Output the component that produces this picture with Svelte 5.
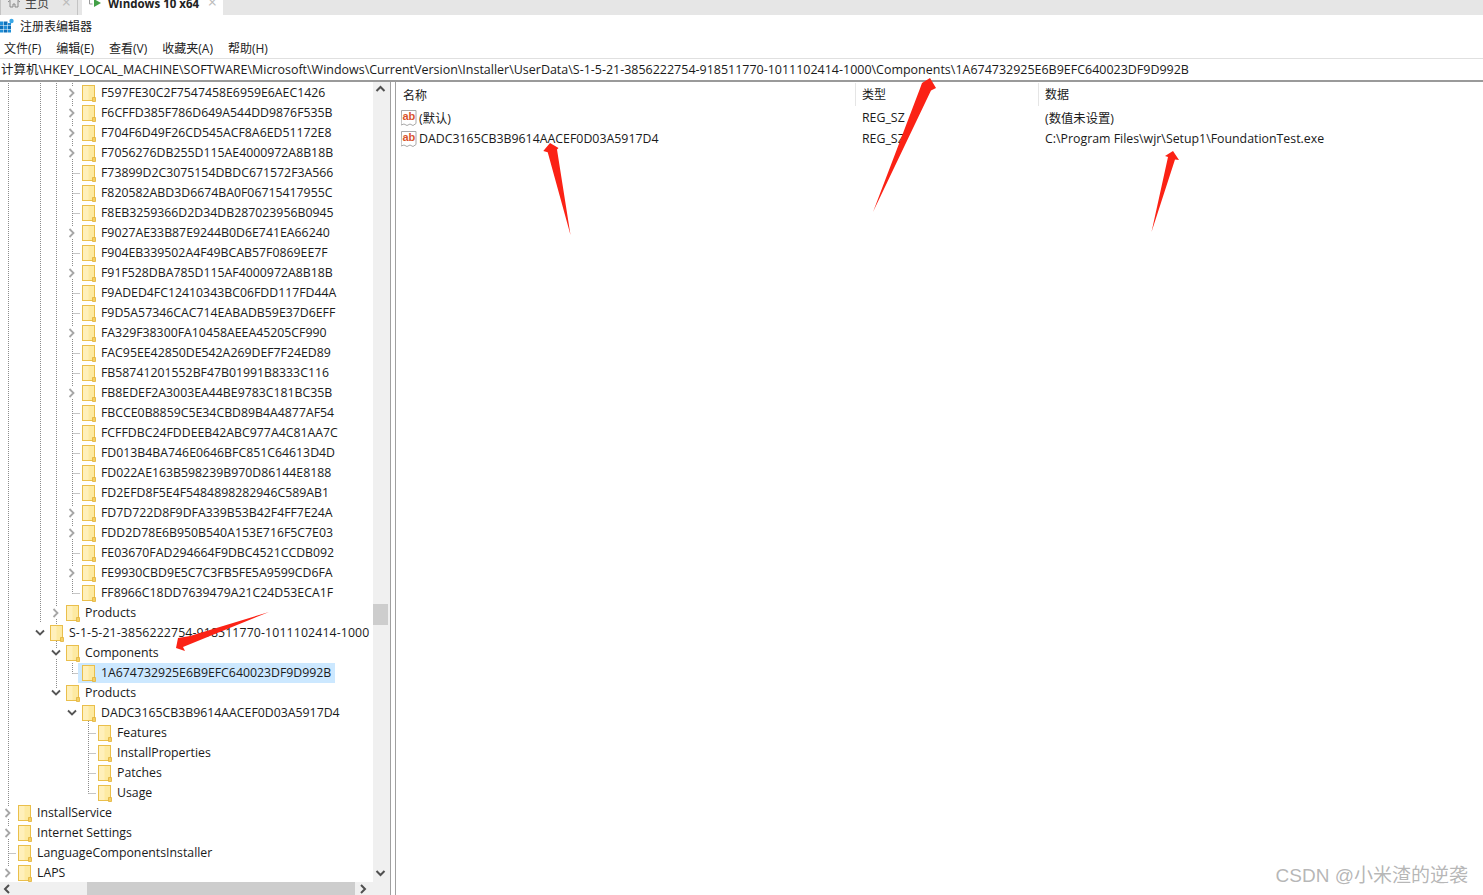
<script>
  const hashes = [
    ['F597FE30C2F7547458E6959E6AEC1426', 1],
    ['F6CFFD385F786D649A544DD9876F535B', 1],
    ['F704F6D49F26CD545ACF8A6ED51172E8', 1],
    ['F7056276DB255D115AE4000972A8B18B', 1],
    ['F73899D2C3075154DBDC671572F3A566', 0],
    ['F820582ABD3D6674BA0F06715417955C', 0],
    ['F8EB3259366D2D34DB287023956B0945', 0],
    ['F9027AE33B87E9244B0D6E741EA66240', 1],
    ['F904EB339502A4F49BCAB57F0869EE7F', 0],
    ['F91F528DBA785D115AF4000972A8B18B', 1],
    ['F9ADED4FC12410343BC06FDD117FD44A', 0],
    ['F9D5A57346CAC714EABADB59E37D6EFF', 0],
    ['FA329F38300FA10458AEEA45205CF990', 1],
    ['FAC95EE42850DE542A269DEF7F24ED89', 0],
    ['FB58741201552BF47B01991B8333C116', 0],
    ['FB8EDEF2A3003EA44BE9783C181BC35B', 1],
    ['FBCCE0B8859C5E34CBD89B4A4877AF54', 0],
    ['FCFFDBC24FDDEEB42ABC977A4C81AA7C', 0],
    ['FD013B4BA746E0646BFC851C64613D4D', 0],
    ['FD022AE163B598239B970D86144E8188', 0],
    ['FD2EFD8F5E4F5484898282946C589AB1', 0],
    ['FD7D722D8F9DFA339B53B42F4FF7E24A', 1],
    ['FDD2D78E6B950B540A153E716F5C7E03', 1],
    ['FE03670FAD294664F9DBC4521CCDB092', 0],
    ['FE9930CBD9E5C7C3FB5FE5A9599CD6FA', 1],
    ['FF8966C18DD7639479A21C24D53ECA1F', 0]
  ];
  const rows = [
    ...hashes.map(([label, more]) => ({ label, level: 4, state: more ? 'closed' : 'none' })),
    { label: 'Products', level: 3, state: 'closed' },
    { label: 'S-1-5-21-3856222754-918511770-1011102414-1000', level: 2, state: 'open', wide: true },
    { label: 'Components', level: 3, state: 'open' },
    { label: '1A674732925E6B9EFC640023DF9D992B', level: 4, state: 'none', selected: true },
    { label: 'Products', level: 3, state: 'open' },
    { label: 'DADC3165CB3B9614AACEF0D03A5917D4', level: 4, state: 'open' },
    { label: 'Features', level: 5, state: 'none' },
    { label: 'InstallProperties', level: 5, state: 'none' },
    { label: 'Patches', level: 5, state: 'none' },
    { label: 'Usage', level: 5, state: 'none' },
    { label: 'InstallService', level: 0, state: 'closed' },
    { label: 'Internet Settings', level: 0, state: 'closed' },
    { label: 'LanguageComponentsInstaller', level: 0, state: 'none' },
    { label: 'LAPS', level: 0, state: 'closed' }
  ];
  const stubs = rows
    .map((r, i) => {
      if (r.state !== 'none') return '';
      const x = 8 + r.level * 16;
      return `M${x + 0.5} ${i * 20 + 10.5}H${x + 8}`;
    })
    .join('');
  const trunks = 'M8.500 0V790M40.500 0V540M56.500 0V610M72.500 0V510.500M72.500 580V590.500M88.500 630V710.500';
  const menus = ['文件(F)', '编辑(E)', '查看(V)', '收藏夹(A)', '帮助(H)'];
  const values = [
    { name: '(默认)', type: 'REG_SZ', data: '(数值未设置)' },
    { name: 'DADC3165CB3B9614AACEF0D03A5917D4', type: 'REG_SZ', data: 'C:\\Program Files\\wjr\\Setup1\\FoundationTest.exe' }
  ];
</script>

<div class="page">
  <div class="tabs">
    <div class="tab home">
      <svg width="14" height="14" viewBox="0 0 14 14" class="ti"><path d="M1 6 7 1l6 5M3 5v6h3V8h2v3h3V5" fill="none" stroke="#8a8a8a"/></svg>
      <span class="tlabel">主页</span>
      <span class="x">×</span>
    </div>
    <div class="tab active">
      <svg width="16" height="14" viewBox="0 0 16 14" class="ti"><path d="M1.500 0v8h3" fill="none" stroke="#999"/><path d="M6 3l7 4-7 4z" fill="#43a047"/></svg>
      <span class="tlabel bold">Windows 10 x64</span>
      <span class="x">×</span>
    </div>
  </div>

  <div class="title">
    <svg width="14" height="16" viewBox="0 0 14 16">
      <rect x="0" y="3.500" width="3.500" height="3.500" fill="#1f8fd8"/><rect x="4" y="3.500" width="3.500" height="3.500" fill="#0f6fb8"/><rect x="8" y="5" width="3" height="2" fill="#1f8fd8"/>
      <rect x="0" y="7.500" width="3.500" height="3.500" fill="#0f6fb8"/><rect x="4" y="7.500" width="3.500" height="3.500" fill="#1f8fd8"/><rect x="8" y="7.500" width="3" height="3.500" fill="#0f6fb8"/>
      <rect x="0" y="11.500" width="3.500" height="3" fill="#1f8fd8"/><rect x="4" y="11.500" width="3.500" height="3" fill="#0f6fb8"/><rect x="8" y="11.500" width="3" height="3" fill="#1f8fd8"/>
      <circle cx="11.500" cy="3" r="2.200" fill="#3aa7e6"/>
    </svg>
    <span>注册表编辑器</span>
  </div>

  <div class="menu">
    {#each menus as m}<span>{m}</span>{/each}
  </div>

  <div class="address">计算机\HKEY_LOCAL_MACHINE\SOFTWARE\Microsoft\Windows\CurrentVersion\Installer\UserData\S-1-5-21-3856222754-918511770-1011102414-1000\Components\1A674732925E6B9EFC640023DF9D992B</div>

  <div class="main">
    <div class="treepane">
      <div class="treebody">
        <div class="tree">
          <svg class="guides" width="373" height="800">
            <g stroke="#8c8c8c" stroke-dasharray="1 1" fill="none">
              <path d={trunks} />
              <path d={stubs} />
            </g>
          </svg>
          {#each rows as r}
            <div class="row lvl{r.level}">
              <span class="chev">
                {#if r.state === 'closed'}
                  <svg class="glyph" width="8" height="10" viewBox="0 0 8 10"><path d="M1.500 1 5.500 5 1.500 9" fill="none" stroke="#a6a6a6" stroke-width="1.800"/></svg>
                {:else if r.state === 'open'}
                  <svg class="glyph" width="10" height="8" viewBox="0 0 10 8"><path d="M1 1.500 5 5.500 9 1.500" fill="none" stroke="#555" stroke-width="1.800"/></svg>
                {/if}
              </span>
              <div class="item" class:selected={r.selected}>
                <svg class="folder" width="14" height="17" viewBox="0 0 14 17">
                  <rect x=".5" y=".5" width="12" height="15" fill="#fdeaa2" stroke="#eabf4c"/>
                  <path d="M1 1h5.500v14H1z" fill="#fff0bb"/>
                  <path d="M10.500 12.500v4h3v-4z" fill="#f5cf63" stroke="#e2b238" stroke-width=".8"/>
                </svg>
                <span class="label" class:wide={r.wide}>{r.label}</span>
              </div>
            </div>
          {/each}
        </div>
        <div class="vbar">
          <svg width="15" height="14" viewBox="0 0 15 14"><path d="M3.500 9 7.500 5l4 4" fill="none" stroke="#505050" stroke-width="2"/></svg>
          <div class="vtrack"><div class="vthumb"></div></div>
          <svg width="15" height="14" viewBox="0 0 15 14"><path d="M3.500 3 7.500 7l4-4" fill="none" stroke="#505050" stroke-width="2"/></svg>
        </div>
      </div>
      <div class="hbar">
        <svg width="14" height="13" viewBox="0 0 14 13"><path d="M9 3 5 7l4 4" fill="none" stroke="#505050" stroke-width="2"/></svg>
        <div class="htrack"><div class="hthumb"></div></div>
        <svg width="14" height="13" viewBox="0 0 14 13"><path d="M2 3l4 4-4 4" fill="none" stroke="#505050" stroke-width="2"/></svg>
      </div>
    </div>

    <div class="list">
      <div class="head">
        <div class="cname">名称</div>
        <div class="ctype">类型</div>
        <div class="cdata">数据</div>
      </div>
      {#each values as v}
        <div class="vrow">
          <div class="cname v">
            <svg class="ab" width="16" height="16" viewBox="0 0 16 16">
              <path d="M.5.5h14.500v13l-3 2-3-1.500-3 1.500-3-1.500-3 1z" fill="#fff" stroke="#a8a8a8"/>
              <text x="1.500" y="10" class="abtext">ab</text>
            </svg>
            <span>{v.name}</span>
          </div>
          <div class="ctype v">{v.type}</div>
          <div class="cdata v">{v.data}</div>
        </div>
      {/each}
    </div>
  </div>

  <svg class="arrows" width="1483" height="895">
    <g fill="#fb2215">
      <polygon points="550,143 558.500,148 557,149.500 570.500,235 547.700,152.300 543.300,151"/>
      <polygon points="930,78 936,88 931,90.500 873,212 920,88.500 922,83"/>
      <polygon points="1173,151 1179,160 1175,159.500 1151.500,232 1168,157 1165,156"/>
      <polygon points="269,612 190,636 178,638 176,648 185,651 183,647"/>
    </g>
  </svg>

  <div class="mark">CSDN @小米渣的逆袭</div>
</div>

<style>
  :global(body) {
    margin: 0;
    background: #fff;
    overflow: hidden;
  }
  .page {
    position: relative;
    width: 1483px;
    height: 895px;
    overflow: hidden;
    display: flex;
    flex-direction: column;
    font-family: "Open Sans", "Noto Sans CJK SC", sans-serif;
    font-size: 12px;
    color: #1a1a1a;
    background: #fff;
  }
  .tabs {
    height: 15px;
    flex: none;
    background: #e6e6e6;
    display: flex;
    align-items: flex-end;
    overflow: hidden;
  }
  .tab {
    height: 24px;
    display: flex;
    align-items: center;
    box-sizing: border-box;
    flex: none;
    position: relative;
  }
  .tab.home {
    width: 78px;
    padding-left: 6px;
    border-right: 1px solid #c4c4c4;
    margin-right: 4px;
    border-left: 1px solid #c4c4c4;
  }
  .tab.active {
    width: 141px;
    padding-left: 6px;
    background: #fff;
  }
  .ti { flex: none; }
  .tlabel { margin-left: 4px; color: #444; }
  .tlabel.bold { margin-left: 4px; font-weight: 700; color: #222; font-size: 11.500px; }
  .x {
    position: absolute;
    right: 6px;
    top: 3px;
    color: #bbb;
    font-size: 16px;
    line-height: 16px;
  }
  .title {
    height: 22px;
    flex: none;
    display: flex;
    align-items: center;
    gap: 6px;
    font-size: 12px;
    color: #222;
  }
  .menu {
    height: 21px;
    flex: none;
    display: flex;
    align-items: center;
    gap: 15px;
    padding-left: 4px;
    font-size: 12px;
    color: #222;
  }
  .address {
    height: 24px;
    flex: none;
    box-sizing: border-box;
    border-top: 1px solid #e0e0e0;
    border-bottom: 2px solid #9a9a9a;
    line-height: 21px;
    padding-left: 1px;
    white-space: nowrap;
    font-size: 12.480px;
  }
  .main {
    flex: 1;
    min-height: 0;
    display: flex;
  }
  .treepane {
    width: 391px;
    flex: none;
    display: flex;
    flex-direction: column;
    box-sizing: border-box;
    border-right: 1px solid #a0a0a0;
  }
  .treebody {
    flex: 1;
    min-height: 0;
    display: flex;
  }
  .tree {
    position: relative;
    width: 373px;
    flex: none;
    overflow: hidden;
    font-size: 12.300px;
    padding-top: 1px;
  }
  .guides {
    position: absolute;
    left: 0;
    top: 1px;
  }
  .row {
    position: relative;
    height: 20px;
    display: flex;
    align-items: center;
    white-space: nowrap;
  }
  .lvl0 { padding-left: 2px; }
  .lvl2 { padding-left: 34px; }
  .lvl3 { padding-left: 50px; }
  .lvl4 { padding-left: 66px; }
  .lvl5 { padding-left: 82px; }
  .chev {
    width: 11px;
    height: 20px;
    flex: none;
    margin-right: 5px;
    display: flex;
    align-items: center;
    justify-content: center;
  }
  .glyph {
    background: #fff;
    box-shadow: 0 0 0 1px #fff;
  }
  .item {
    display: flex;
    align-items: center;
    height: 20px;
    margin-left: -4px;
    padding-left: 4px;
  }
  .item.selected {
    background: #cce8ff;
  }
  .folder {
    flex: none;
  }
  .label {
    margin-left: 2px;
    padding: 0 4px 0 3px;
    line-height: 20px;
  }
  .label.wide {
    letter-spacing: .13px;
  }
  .vbar {
    flex: 1;
    display: flex;
    flex-direction: column;
    background: #f0f0f0;
  }
  .vtrack {
    flex: 1;
    position: relative;
  }
  .vthumb {
    position: absolute;
    left: 0;
    width: 15px;
    top: 508px;
    height: 21px;
    background: #cdcdcd;
  }
  .hbar {
    height: 13px;
    flex: none;
    display: flex;
    background: #f0f0f0;
  }
  .htrack {
    width: 345px;
    flex: none;
    position: relative;
  }
  .hthumb {
    position: absolute;
    left: 73px;
    width: 268px;
    top: 0;
    bottom: 0;
    background: #cdcdcd;
  }
  .list {
    flex: 1;
    min-width: 0;
    margin-left: 4px;
    border-left: 1px solid #a0a0a0;
  }
  .head {
    height: 25px;
    display: flex;
    align-items: center;
  }
  .head .cname { padding-left: 7px; }
  .head .ctype, .head .cdata {
    border-left: 1px solid #e5e5e5;
    height: 23px;
    line-height: 23px;
    padding-left: 6px;
  }
  .vrow {
    height: 21px;
    display: flex;
    align-items: center;
    font-size: 12.350px;
  }
  .cname {
    width: 459px;
    box-sizing: border-box;
    flex: none;
    display: flex;
    align-items: center;
  }
  .ctype {
    width: 183px;
    box-sizing: border-box;
    flex: none;
  }
  .cdata {
    flex: 1;
  }
  .cname.v { padding-left: 5px; gap: 2px; }
  .ctype.v { padding-left: 7px; }
  .cdata.v { padding-left: 7px; }
  .ab { flex: none; }
  .abtext {
    font-family: "Liberation Sans", sans-serif;
    font-size: 11px;
    font-weight: 700;
    fill: #d9532c;
  }
  .arrows {
    position: absolute;
    left: 0;
    top: 0;
    pointer-events: none;
  }
  .mark {
    position: absolute;
    right: 15px;
    bottom: 8px;
    font-family: "Liberation Sans", "Noto Sans CJK SC", sans-serif;
    font-size: 19px;
    color: rgba(120, 120, 120, .55);
  }
</style>
